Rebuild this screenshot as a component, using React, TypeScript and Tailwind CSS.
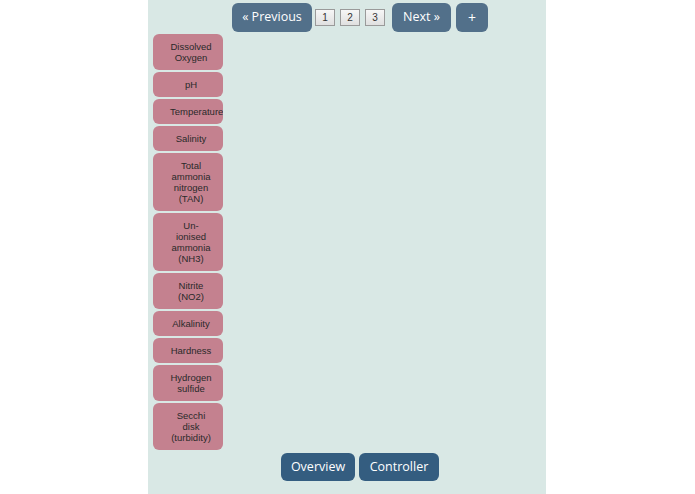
const params = [
  'Dissolved Oxygen',
  'pH',
  'Temperature',
  'Salinity',
  'Total ammonia nitrogen (TAN)',
  'Un-ionised ammonia (NH3)',
  'Nitrite (NO2)',
  'Alkalinity',
  'Hardness',
  'Hydrogen sulfide',
  'Secchi disk (turbidity)',
];

const navBtn =
  'h-[29px] rounded-[6px] bg-[#52708a] text-white text-[12.5px] font-medium leading-none flex items-center justify-center';

export default function App() {
  return (
    <div className="min-h-screen bg-white" style={{ fontFamily: '"Open Sans", "Liberation Sans", sans-serif' }}>
      <div className="ml-[148px] w-[398px] min-h-screen bg-[#d9e8e5] flex flex-col">
        <div className="flex items-center justify-center pl-[26px] pt-[3px]">
          <button className={`${navBtn} w-[80px] mr-[3px]`}>« Previous</button>
          {[1, 2, 3].map(n => (
            <button
              key={n}
              className="w-[20px] h-[17px] mr-[5px] border border-[#9a9a9a] bg-gradient-to-b from-[#f6f6f6] to-[#e0e0e0] text-[10px] text-[#333] flex items-center justify-center"
              style={{ fontFamily: '"Liberation Sans", Arial, sans-serif' }}
            >
              {n}
            </button>
          ))}
          <button className={`${navBtn} w-[59px] ml-[2px]`}>Next »</button>
          <button className={`${navBtn} w-[32px] ml-[5px] text-[14px]`}>+</button>
        </div>

        <div className="flex flex-col gap-[2px] mt-[2px] ml-[5px] w-[70px]">
          {params.map(p => (
            <div
              key={p}
              className="w-[70px] rounded-[6px] bg-[#c4818f] text-[#2a2a2a] text-[9.5px] leading-[11px] text-center pl-[17px] pr-[11px] py-[7px] overflow-hidden"
              style={{ fontFamily: '"Liberation Sans", Arial, sans-serif' }}
            >
              <div className="w-[42px] break-normal">{p}</div>
            </div>
          ))}
        </div>

        <div className="flex justify-center gap-[4px] pl-[26px] mt-[3px]">
          <button className="h-[28px] w-[74px] rounded-[6px] bg-[#345d80] text-white text-[12.5px] font-medium">Overview</button>
          <button className="h-[28px] w-[80px] rounded-[6px] bg-[#345d80] text-white text-[12.5px] font-medium">Controller</button>
        </div>
      </div>
    </div>
  );
}
